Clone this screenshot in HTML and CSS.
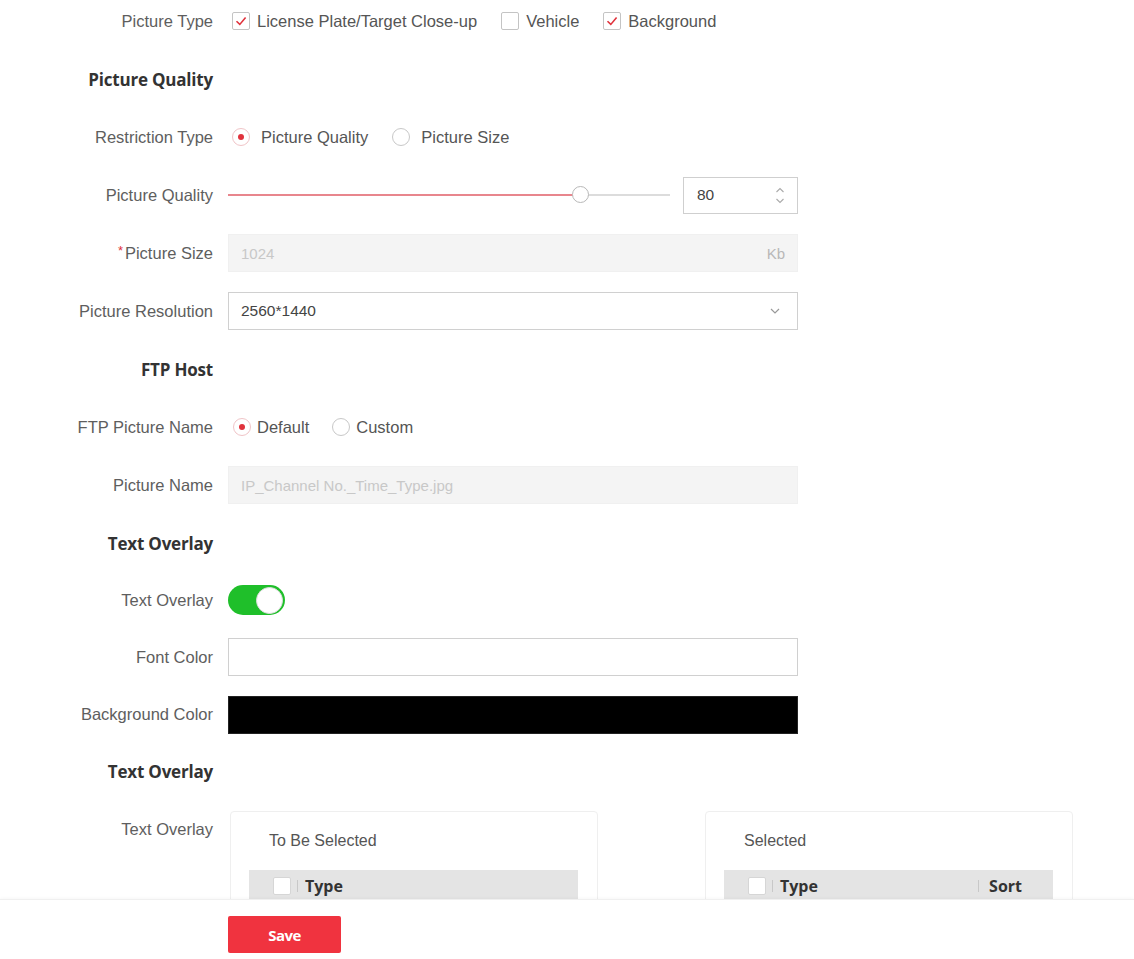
FILE: index.html
```html
<!DOCTYPE html>
<html>
<head>
<meta charset="utf-8">
<title>Picture Settings</title>
<link rel="stylesheet" href="styles.css">
</head>
<body>
<div class="form">
  <div class="group">
    <div class="row">
      <div class="label">Picture Type</div>
      <div class="control opts">
        <span class="opt"><span class="cb checked"><svg viewBox="0 0 16 16" width="16" height="16"><path d="M3.5 8.2 L6.8 11.4 L12.6 4.6" fill="none" stroke="#e0323c" stroke-width="1.6"/></svg></span>License Plate/Target Close-up</span>
        <span class="opt"><span class="cb"></span>Vehicle</span>
        <span class="opt"><span class="cb checked"><svg viewBox="0 0 16 16" width="16" height="16"><path d="M3.5 8.2 L6.8 11.4 L12.6 4.6" fill="none" stroke="#e0323c" stroke-width="1.6"/></svg></span>Background</span>
      </div>
    </div>
    <div class="row heading"><div class="label">Picture Quality</div></div>
    <div class="row">
      <div class="label">Restriction Type</div>
      <div class="control opts">
        <span class="opt radio-opt"><span class="rb on"></span>Picture Quality</span>
        <span class="opt radio-opt"><span class="rb"></span>Picture Size</span>
      </div>
    </div>
    <div class="row">
      <div class="label">Picture Quality</div>
      <div class="control slider-row">
        <div class="slider">
          <div class="fill"></div>
          <div class="thumb"></div>
        </div>
        <div class="num">
          <span>80</span>
          <span class="spin">
            <svg viewBox="0 0 10 8" width="10" height="8"><path d="M1.5 6 L5 2.5 L8.5 6" fill="none" stroke="#aaa" stroke-width="1.1"/></svg>
            <svg viewBox="0 0 10 8" width="10" height="8"><path d="M1.5 2 L5 5.5 L8.5 2" fill="none" stroke="#aaa" stroke-width="1.1"/></svg>
          </span>
        </div>
      </div>
    </div>
    <div class="row">
      <div class="label"><span class="req">*</span>Picture Size</div>
      <div class="control box disabled"><span>1024</span><span class="unit">Kb</span></div>
    </div>
    <div class="row">
      <div class="label">Picture Resolution</div>
      <div class="control box select"><span class="val">2560*1440</span>
        <svg viewBox="0 0 12 8" width="12" height="8"><path d="M2 2 L6 6 L10 2" fill="none" stroke="#999" stroke-width="1.2"/></svg>
      </div>
    </div>
    <div class="row heading"><div class="label">FTP Host</div></div>
    <div class="row">
      <div class="label">FTP Picture Name</div>
      <div class="control opts tight-opts">
        <span class="opt radio-opt tight"><span class="rb on"></span>Default</span>
        <span class="opt radio-opt tight"><span class="rb"></span>Custom</span>
      </div>
    </div>
    <div class="row">
      <div class="label">Picture Name</div>
      <div class="control box disabled"><span>IP_Channel No._Time_Type.jpg</span></div>
    </div>
    <div class="row heading"><div class="label">Text Overlay</div></div>
  </div>
  <div class="group second">
    <div class="row">
      <div class="label">Text Overlay</div>
      <div class="control"><span class="toggle"><span class="knob"></span></span></div>
    </div>
    <div class="row">
      <div class="label">Font Color</div>
      <div class="control box"></div>
    </div>
    <div class="row">
      <div class="label">Background Color</div>
      <div class="control box black"></div>
    </div>
    <div class="row heading"><div class="label">Text Overlay</div></div>
    <div class="row transfer-row">
      <div class="label">Text Overlay</div>
      <div class="transfer">
        <div class="panel">
          <div class="panel-title">To Be Selected</div>
          <div class="thead">
            <span class="cb small"></span><span class="sep"></span><span class="th">Type</span>
          </div>
        </div>
        <div class="panel right">
          <div class="panel-title">Selected</div>
          <div class="thead">
            <span class="cb small"></span><span class="sep"></span><span class="th grow">Type</span><span class="sep sort-sep"></span><span class="th sort">Sort</span>
          </div>
        </div>
      </div>
    </div>
  </div>
</div>
<div class="footer">
  <button class="save">Save</button>
</div>
</body>
</html>
```
FILE: styles.css
```css
html, body {
  margin: 0;
  padding: 0;
  height: 100%;
  overflow: hidden;
  background: #fff;
}
body {
  font-family: "Liberation Sans", Arial, sans-serif;
  font-size: 16.5px;
  color: #555;
}
.form {
  padding-top: 2px;
  display: flex;
  flex-direction: column;
  gap: 19px;
}
.group {
  display: flex;
  flex-direction: column;
  gap: 20px;
}
.group.second {
  gap: 19.25px;
}
.row {
  display: flex;
  align-items: center;
  height: 38px;
}
.label {
  width: 213px;
  flex: none;
  text-align: right;
  white-space: nowrap;
  color: #5e5e5e;
}
.heading .label {
  font-family: "Open Sans", "Liberation Sans", sans-serif;
  font-weight: 700;
  font-size: 17px;
  color: #333;
  letter-spacing: -0.2px;
}
.req {
  color: #e0323c;
  font-size: 13px;
  vertical-align: 4px;
  margin-right: 2px;
}
.control {
  margin-left: 15px;
  width: 570px;
  box-sizing: border-box;
  height: 38px;
  display: flex;
  align-items: center;
}
.opts {
  padding-left: 4px;
  gap: 24px;
}
.opts.tight-opts {
  padding-left: 5px;
  gap: 23px;
}
.opt {
  display: inline-flex;
  align-items: center;
  gap: 7px;
  white-space: nowrap;
  color: #555;
}
.radio-opt { gap: 11px; }
.radio-opt.tight { gap: 6px; }
.cb {
  width: 16px;
  height: 16px;
  border: 1px solid #c4c4c4;
  border-radius: 2px;
  background: #fff;
  display: inline-block;
  position: relative;
  flex: none;
}
.cb svg {
  position: absolute;
  left: 0;
  top: 0;
}
.rb {
  width: 16px;
  height: 16px;
  border: 1px solid #c8c8c8;
  border-radius: 50%;
  background: #fff;
  position: relative;
  flex: none;
}
.rb.on {
  border-color: #f0c4c7;
}
.rb.on::after {
  content: "";
  position: absolute;
  left: 5px;
  top: 5px;
  width: 6px;
  height: 6px;
  border-radius: 50%;
  background: #e0323c;
}
.slider-row {
  gap: 13px;
}
.slider {
  position: relative;
  width: 442px;
  height: 2px;
  background: #dcdcdc;
  flex: none;
}
.fill {
  width: 352px;
  height: 2px;
  background: #e8868d;
}
.thumb {
  position: absolute;
  left: 344px;
  top: -8px;
  width: 15px;
  height: 15px;
  border: 1px solid #b8b8b8;
  border-radius: 50%;
  background: #fff;
}
.num {
  width: 115px;
  height: 37px;
  box-sizing: border-box;
  border: 1px solid #cfcfcf;
  display: flex;
  align-items: center;
  justify-content: space-between;
  padding: 0 12px 0 13px;
  color: #444;
  font-size: 15.5px;
}
.spin {
  display: flex;
  flex-direction: column;
  gap: 3px;
}
.spin svg { display: block; }
.box {
  border: 1px solid #d0d0d0;
  background: #fff;
  padding: 0 12px;
  justify-content: space-between;
}
.box.disabled {
  background: #f4f4f4;
  border-color: #f0f0f0;
  color: #c8c8c8;
  font-size: 15px;
}
.box.disabled .unit {
  color: #b8b8b8;
}
.select .val {
  color: #444;
  font-size: 15.5px;
}
.select svg { margin-right: 4px; }
.box.black {
  background: #000;
  border-color: #222;
}
.toggle {
  width: 57px;
  height: 30px;
  border-radius: 15px;
  background: #1fbf2a;
  position: relative;
  display: inline-block;
}
.knob {
  position: absolute;
  right: 2px;
  top: 2px;
  width: 25px;
  height: 25px;
  border: 0.5px solid #ddd;
  border-radius: 50%;
  background: #fff;
}
.transfer-row {
  align-items: flex-start;
  height: auto;
}
.transfer-row .label {
  line-height: 38px;
}
.transfer {
  margin-left: 17px;
  margin-top: 1px;
  display: flex;
  gap: 107px;
}
.panel {
  width: 368px;
  height: 260px;
  box-sizing: border-box;
  border: 1px solid #efefef;
  border-radius: 4px;
  padding: 18px 19px 0 18px;
}
.panel-title {
  padding-left: 20px;
  height: 22px;
  line-height: 22px;
  color: #555;
  font-size: 16px;
}
.thead {
  margin-top: 18px;
  height: 31px;
  background: #e4e4e4;
  display: flex;
  align-items: center;
  padding-left: 24px;
  padding-right: 31px;
}
.cb.small {
  width: 16px;
  height: 16px;
  border-color: #d6d6d6;
}
.sep {
  width: 1px;
  height: 12px;
  background: #c8c8c8;
  margin: 0 7px 0 6px;
}
.sort-sep {
  margin: 0 10px 0 0;
}
.th {
  font-family: "Open Sans", "Liberation Sans", sans-serif;
  font-weight: 700;
  font-size: 16px;
  color: #333;
}
.th.grow { flex: 1; }
.footer {
  position: fixed;
  left: 0;
  right: 0;
  bottom: 0;
  height: 60px;
  box-sizing: border-box;
  background: #fff;
  border-top: 1px solid #f0f0f0;
  box-shadow: 0 -1px 3px rgba(0,0,0,0.03);
  display: flex;
  align-items: flex-start;
  padding-left: 228px;
  padding-top: 16px;
}
.save {
  width: 113px;
  height: 37px;
  border: none;
  border-radius: 2px;
  background: #f0333f;
  color: #fff;
  font-family: "Open Sans", "Liberation Sans", sans-serif;
  font-weight: 700;
  font-size: 15px;
  letter-spacing: -0.5px;
}
```
